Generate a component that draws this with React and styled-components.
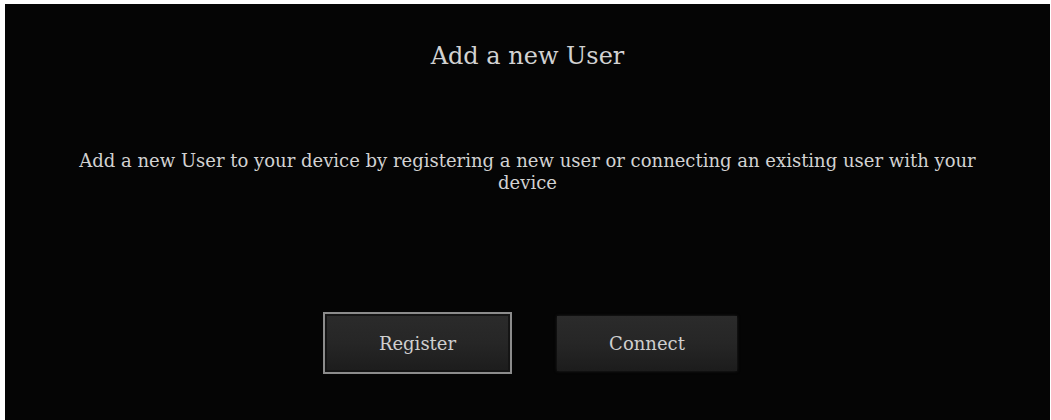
import styled, { createGlobalStyle } from 'styled-components';

const GlobalStyle = createGlobalStyle`
  html, body {
    margin: 0;
    padding: 0;
    background: #ffffff;
  }
  body {
    font-family: "DejaVu Serif", "Liberation Serif", serif;
  }
`;

const Screen = styled.div`
  box-sizing: border-box;
  margin: 4px 1px 0 5px;
  height: 416px;
  background: #050505;
  display: flex;
  flex-direction: column;
  align-items: center;
  color: #d2d2d2;
`;

const Title = styled.h1`
  margin: 36px 0 0;
  font-size: 24px;
  font-weight: normal;
  line-height: 32px;
`;

const Message = styled.p`
  margin: 78px 0 0;
  width: 930px;
  text-align: center;
  font-size: 18px;
  line-height: 22px;
`;

const ButtonRow = styled.div`
  display: flex;
  align-items: center;
  gap: 45px;
  margin-top: 118px;
  margin-left: 5px;
`;

const Button = styled.button`
  box-sizing: border-box;
  width: ${({ focused }) => (focused ? '189px' : '180px')};
  height: ${({ focused }) => (focused ? '62px' : '55px')};
  border: ${({ focused }) => (focused ? '2px solid #8c8c8c' : 'none')};
  box-shadow: ${({ focused }) => (focused ? 'inset 0 0 0 2px #151515' : '0 0 3px #222')};
  background: linear-gradient(#2b2b2b, #262626 50%, #1c1c1c);
  color: #cfcfcf;
  font-family: "DejaVu Serif", "Liberation Serif", serif;
  font-size: 18px;
  padding: 0;
  cursor: pointer;
`;

const App = () => (
  <>
    <GlobalStyle />
    <Screen>
      <Title>Add a new User</Title>
      <Message>
        Add a new User to your device by registering a new user or connecting an existing user with your device
      </Message>
      <ButtonRow>
        <Button focused>Register</Button>
        <Button>Connect</Button>
      </ButtonRow>
    </Screen>
  </>
);

export default App;
